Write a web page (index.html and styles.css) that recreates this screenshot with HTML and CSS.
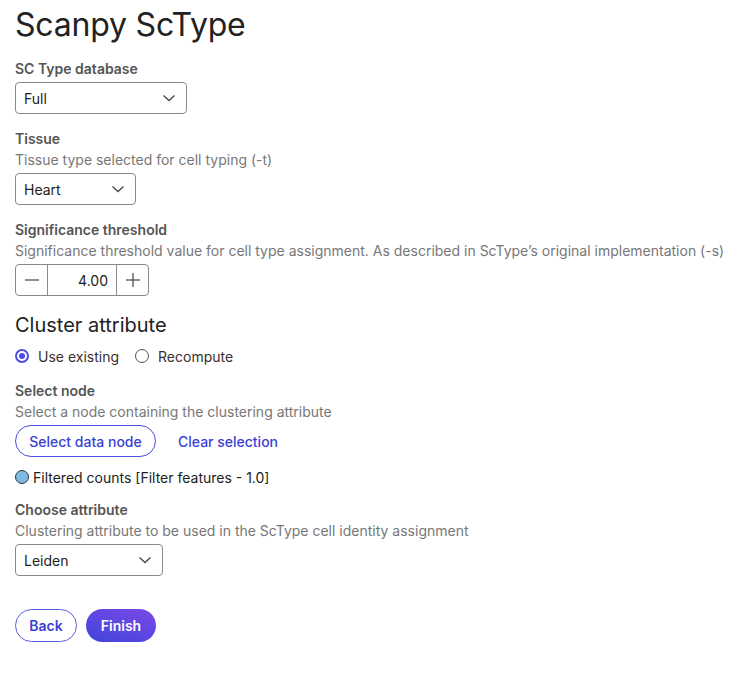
FILE: index.html
```html
<!DOCTYPE html>
<html>
<head>
<meta charset="utf-8">
<link rel="stylesheet" href="styles.css">
</head>
<body>
<h1 class="title">Scanpy ScType</h1>

<div class="field first">
  <div class="label">SC Type database</div>
  <div class="select w-db"><span>Full</span><svg class="chev" width="14" height="8" viewBox="0 0 14 8"><polyline points="1.5,1.5 7,6.5 12.5,1.5" fill="none" stroke="#444" stroke-width="1.3"/></svg></div>
</div>

<div class="field">
  <div class="label">Tissue</div>
  <div class="desc">Tissue type selected for cell typing (-t)</div>
  <div class="select w-tissue"><span>Heart</span><svg class="chev" width="14" height="8" viewBox="0 0 14 8"><polyline points="1.5,1.5 7,6.5 12.5,1.5" fill="none" stroke="#444" stroke-width="1.3"/></svg></div>
</div>

<div class="field">
  <div class="label">Significance threshold</div>
  <div class="desc">Significance threshold value for cell type assignment. As described in ScType’s original implementation (-s)</div>
  <div class="stepper">
    <div class="step"><svg width="14" height="14" viewBox="0 0 14 14"><line x1="0" y1="7" x2="14" y2="7" stroke="#444" stroke-width="1.2"/></svg></div>
    <div class="step-value">4.00</div>
    <div class="step"><svg width="14" height="14" viewBox="0 0 14 14"><line x1="0" y1="7" x2="14" y2="7" stroke="#444" stroke-width="1.2"/><line x1="7" y1="0" x2="7" y2="14" stroke="#444" stroke-width="1.2"/></svg></div>
  </div>
</div>

<h2 class="heading">Cluster attribute</h2>
<div class="radios">
  <div class="radio-item"><span class="radio checked"></span><span>Use existing</span></div>
  <div class="radio-item"><span class="radio"></span><span>Recompute</span></div>
</div>

<div class="field">
  <div class="label">Select node</div>
  <div class="desc">Select a node containing the clustering attribute</div>
  <div class="btn-row">
    <button class="btn-outline">Select data node</button>
    <button class="btn-link">Clear selection</button>
  </div>
</div>

<div class="node-row"><span class="node-dot"></span><span>Filtered counts [Filter features - 1.0]</span></div>

<div class="field attr">
  <div class="label">Choose attribute</div>
  <div class="desc">Clustering attribute to be used in the ScType cell identity assignment</div>
  <div class="select w-attr"><span>Leiden</span><svg class="chev" width="14" height="8" viewBox="0 0 14 8"><polyline points="1.5,1.5 7,6.5 12.5,1.5" fill="none" stroke="#444" stroke-width="1.3"/></svg></div>
</div>

<div class="footer">
  <button class="btn-back">Back</button>
  <button class="btn-finish">Finish</button>
</div>
</body>
</html>
```

FILE: styles.css
```css
* { box-sizing: border-box; }
body {
  margin: 0;
  padding: 6px 15px 0;
  font-family: Inter, "Noto Sans", sans-serif;
  color: #222;
  background: #fff;
}
.title {
  margin: 0;
  font-size: 32px;
  line-height: 38px;
  font-weight: 400;
  letter-spacing: -0.2px;
  color: #222;
}
.field { margin-top: 15px; }
.field.first { margin-top: 15px; }
.field.attr { margin-top: 13px; }
.label {
  font-size: 14px;
  line-height: 20px;
  font-weight: 600;
  color: #555;
}
.desc {
  margin-top: 1px;
  font-size: 14px;
  line-height: 20px;
  color: #777;
}
.select {
  margin-top: 3px;
  height: 32px;
  border: 1px solid #8a8a8a;
  border-radius: 4px;
  display: flex;
  align-items: center;
  justify-content: space-between;
  padding: 0 10px 0 8px;
  font-size: 14px;
  color: #222;
}
.w-db { width: 172px; }
.w-tissue { width: 121px; }
.w-attr { width: 148px; }
.chev { display: block; }
.stepper {
  margin-top: 3px;
  display: flex;
  width: 134px;
  height: 32px;
  border: 1px solid #8a8a8a;
  border-radius: 4px;
}
.step {
  width: 31px;
  display: flex;
  align-items: center;
  justify-content: center;
}
.step-value {
  width: 70px;
  border-left: 1px solid #8a8a8a;
  border-right: 1px solid #8a8a8a;
  display: flex;
  align-items: center;
  justify-content: flex-end;
  padding-right: 8px;
  font-size: 14px;
  color: #222;
}
.heading {
  margin: 17px 0 0;
  font-size: 20px;
  line-height: 24px;
  font-weight: 400;
  color: #222;
}
.radios {
  margin-top: 9px;
  display: flex;
  gap: 16px;
  height: 20px;
  align-items: center;
  font-size: 14px;
  color: #3a2f2f;
}
.radio-item {
  display: flex;
  align-items: center;
  gap: 9px;
}
.radio {
  width: 14px;
  height: 14px;
  border-radius: 50%;
  border: 1.5px solid #555;
  display: flex;
  align-items: center;
  justify-content: center;
}
.radio.checked { border: 2px solid #4a4fe4; }
.radio.checked::after {
  content: "";
  width: 6px;
  height: 6px;
  border-radius: 50%;
  background: #4a4fe4;
}
.btn-row {
  margin-top: 3px;
  display: flex;
  align-items: center;
  gap: 22px;
}
button {
  font-family: Inter, "Noto Sans", sans-serif;
  font-size: 14px;
  font-weight: 500;
  cursor: pointer;
}
.btn-outline {
  height: 32px;
  width: 141px;
  border: 1px solid #4c4fe0;
  border-radius: 16px;
  background: #fff;
  color: #3b3fd6;
  padding: 0;
}
.btn-link {
  border: none;
  background: none;
  padding: 0;
  color: #3b3fd6;
}
.node-row {
  margin-top: 10px;
  height: 20px;
  display: flex;
  align-items: center;
  gap: 4px;
  font-size: 14px;
  color: #222;
}
.node-dot {
  width: 14px;
  height: 14px;
  border-radius: 50%;
  background: #7cbbe3;
  border: 1px solid #333;
}
.footer {
  margin-top: 33px;
  display: flex;
  gap: 9px;
}
.btn-back {
  height: 33px;
  width: 62px;
  border: 1px solid #5b5ee4;
  border-radius: 17px;
  background: #fff;
  color: #3b3fd6;
  font-weight: 600;
  padding: 0;
}
.btn-finish {
  height: 33px;
  width: 70px;
  border: none;
  border-radius: 17px;
  background: linear-gradient(200deg, #7b48e6 0%, #3f45dc 100%);
  color: #fff;
  font-weight: 600;
  padding: 0;
}
```
